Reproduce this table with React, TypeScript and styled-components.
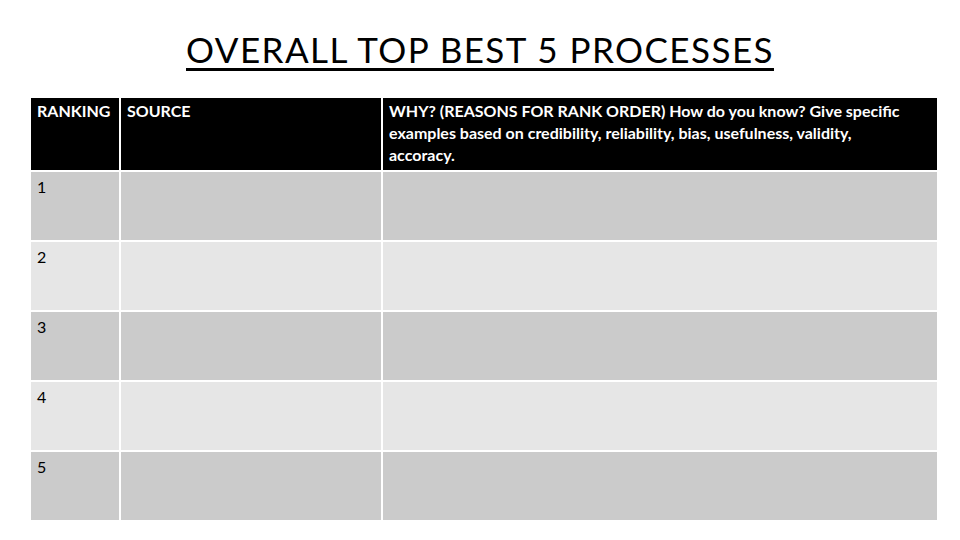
import React from "react";
import styled, { createGlobalStyle } from "styled-components";

const GlobalStyle = createGlobalStyle`
  html, body {
    margin: 0;
    padding: 0;
    background: #ffffff;
  }
  body {
    font-family: Lato, "Open Sans", "Liberation Sans", sans-serif;
  }
`;

const rows = ["1", "2", "3", "4", "5"];

const App = () => {
  return (
    <Slide>
      <GlobalStyle />
      <Title>OVERALL TOP BEST 5 PROCESSES</Title>
      <Table>
        <HeadCell>RANKING</HeadCell>
        <HeadCell>SOURCE</HeadCell>
        <HeadCell>
          WHY? (REASONS FOR RANK ORDER) How do you know? Give specific
          <br />
          examples based on credibility, reliability, bias, usefulness, validity,
          <br />
          accoracy.
        </HeadCell>
        {rows.map((r, i) => (
          <React.Fragment key={r}>
            <Cell $alt={i % 2 === 1}>{r}</Cell>
            <Cell $alt={i % 2 === 1} />
            <Cell $alt={i % 2 === 1} />
          </React.Fragment>
        ))}
      </Table>
    </Slide>
  );
};

export default App;

const Slide = styled.div`
  width: 960px;
  height: 540px;
  box-sizing: border-box;
  padding: 26px 23px 0 31px;
  display: flex;
  flex-direction: column;
  align-items: center;
`;

const Title = styled.h1`
  margin: 0 0 0 -8px;
  font-family: Lato, "Open Sans", sans-serif;
  font-weight: 400;
  font-size: 35px;
  letter-spacing: 1.45px;
  line-height: 46px;
  color: #000;
  text-decoration: underline;
  text-decoration-thickness: 3px;
  text-underline-offset: 5px;
`;

const Table = styled.div`
  margin-top: 26px;
  width: 906px;
  display: grid;
  grid-template-columns: 88px 260px 554px;
  grid-template-rows: 72px repeat(5, 68px);
  gap: 2px;
  background: #ffffff;
`;

const HeadCell = styled.div`
  background: #000000;
  color: #ffffff;
  font-family: Lato, "Open Sans", sans-serif;
  font-weight: 700;
  font-size: 16px;
  line-height: 22px;
  padding: 2px 4px 0 6px;
  white-space: nowrap;
`;

const Cell = styled.div<{ $alt?: boolean }>`
  background: ${(p) => (p.$alt ? "#e6e6e6" : "#cbcbcb")};
  color: #000;
  font-family: Lato, "Open Sans", sans-serif;
  font-size: 16px;
  line-height: 22px;
  padding: 4px 6px 0 6px;
`;
